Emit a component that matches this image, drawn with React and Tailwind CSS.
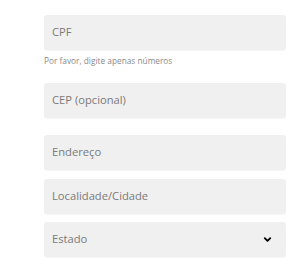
import { ChevronDown } from "lucide-react";

function Field({ label, className = "", select = false }) {
  return (
    <div
      className={`flex h-[35px] items-center justify-between rounded-[3px] bg-[#f0f0f0] pl-2 pr-[13px] shadow-[0_1px_1px_rgba(0,0,0,0.04)] ${className}`}
    >
      <span className="text-[11.2px] text-[#7a7a7a]">{label}</span>
      {select && <ChevronDown className="h-[11px] w-[11px] text-black" strokeWidth={4} />}
    </div>
  );
}

export default function App() {
  return (
    <div className="h-[267px] w-[300px] overflow-hidden bg-white font-['Open_Sans',sans-serif]">
      <div className="ml-[44px] flex w-[242px] flex-col pt-[15px]">
        <Field label="CPF" />
        <p className="mt-[5px] text-[8.3px] leading-[12px] text-[#8a8a8a]">Por favor, digite apenas números</p>
        <Field label="CEP (opcional)" className="mt-[16px]" />
        <Field label="Endereço" className="mt-[17px]" />
        <Field label="Localidade/Cidade" className="mt-[9px]" />
        <Field label="Estado" className="mt-[8px]" select />
      </div>
    </div>
  );
}
